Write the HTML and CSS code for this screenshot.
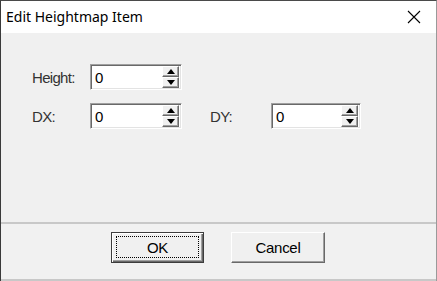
FILE: index.html
```html
<!DOCTYPE html>
<html>
<head>
<meta charset="utf-8">
<link rel="stylesheet" href="styles.css">
</head>
<body>
<div class="window">
  <div class="titlebar">
    <span class="title">Edit Heightmap Item</span>
    <svg class="close" width="14" height="14" viewBox="0 0 14 14"><path d="M1 1 L13 13 M13 1 L1 13" stroke="#000" stroke-width="1.1" fill="none"/></svg>
  </div>
  <div class="main">
    <div class="grid">
      <span class="label">Height:</span>
      <div class="spin"><span class="val">0</span><div class="spinbtns"><div class="sb"><i class="up"></i></div><div class="sb"><i class="down"></i></div></div></div>
      <span></span><span></span><span></span>
      <span class="label">DX:</span>
      <div class="spin"><span class="val">0</span><div class="spinbtns"><div class="sb"><i class="up"></i></div><div class="sb"><i class="down"></i></div></div></div>
      <span></span>
      <span class="label">DY:</span>
      <div class="spin"><span class="val">0</span><div class="spinbtns"><div class="sb"><i class="up"></i></div><div class="sb"><i class="down"></i></div></div></div>
    </div>
  </div>
  <div class="footer">
    <div class="btn default"><span class="focus">OK</span></div>
    <div class="btn cancel"><span>Cancel</span></div>
  </div>
</div>
</body>
</html>
```
FILE: styles.css
```css
html, body { margin: 0; padding: 0; background: #2b2b2b; }
.window {
  width: 437px; height: 281px; box-sizing: border-box;
  display: flex; flex-direction: column;
  border-left: 1px solid #3a3a3a; border-right: 1px solid #9a9a9a; border-top: 1px solid #4a4a4a;
  background: #f0f0f0;
  font-family: "Liberation Sans", Arial, sans-serif;
}
.titlebar {
  height: 32px; background: #fff; flex: none;
  display: flex; align-items: center; justify-content: space-between;
  padding: 0 15px 0 5px;
}
.title { font-family: "Noto Sans", sans-serif; font-size: 14px; color: #000; margin-top: -1px; }
.close { display: block; }
.main {
  height: 191px; flex: none; box-sizing: border-box;
  padding: 31px 0 0 31px;
  border-bottom: 2px solid #c8c8c8;
}
.grid {
  display: grid;
  grid-template-columns: 58px 92px 28px 61px 90px;
  grid-auto-rows: 26px;
  row-gap: 13px;
  align-items: center;
}
.label { font-size: 15px; letter-spacing: -0.7px; color: #333; }
.spin {
  height: 26px; box-sizing: border-box; background: #fff;
  border: 1px solid; border-color: #a0a0a0 #fff #fff #a0a0a0;
  box-shadow: inset 1px 1px 0 #696969, inset -1px -1px 0 #e3e3e3;
  display: flex; align-items: center; padding: 2px 2px 2px 4px;
}
.val { font-size: 15px; color: #000; flex: 1; }
.spinbtns { width: 17px; height: 22px; display: flex; flex-direction: column; }
.sb {
  flex: 1; box-sizing: border-box; background: #f0f0f0;
  border: 1px solid; border-color: #fff #696969 #696969 #fff;
  box-shadow: inset -1px -1px 0 #a0a0a0;
  display: flex; align-items: center; justify-content: center;
}
.up, .down { display: block; width: 0; height: 0; border-left: 4px solid transparent; border-right: 4px solid transparent; }
.up { border-bottom: 5px solid #000; }
.down { border-top: 5px solid #000; }
.footer {
  flex: 1; box-sizing: border-box; background: #f1f1f1;
  border-bottom: 2px solid #c8c8c8;
  display: flex; gap: 27px; padding: 8px 0 0 110px;
}
.btn {
  height: 31px; box-sizing: border-box; background: #f0f0f0;
  display: flex; align-items: center; justify-content: center;
  font-size: 15px; letter-spacing: -0.3px; color: #000;
}
.default {
  width: 93px;
  border: 1px solid #3c3c3c;
  box-shadow: inset 1px 1px 0 #fff, inset -1px -1px 0 #696969, inset -2px -2px 0 #a0a0a0;
  padding: 3px 4px 4px 4px;
  align-items: stretch;
}
.default .focus {
  flex: 1; border: 1px dotted #000;
  display: flex; align-items: center; justify-content: center;
}
.cancel {
  width: 94px;
  border: 1px solid; border-color: #fff #696969 #696969 #fff;
  box-shadow: inset -1px -1px 0 #a0a0a0;
}
```
